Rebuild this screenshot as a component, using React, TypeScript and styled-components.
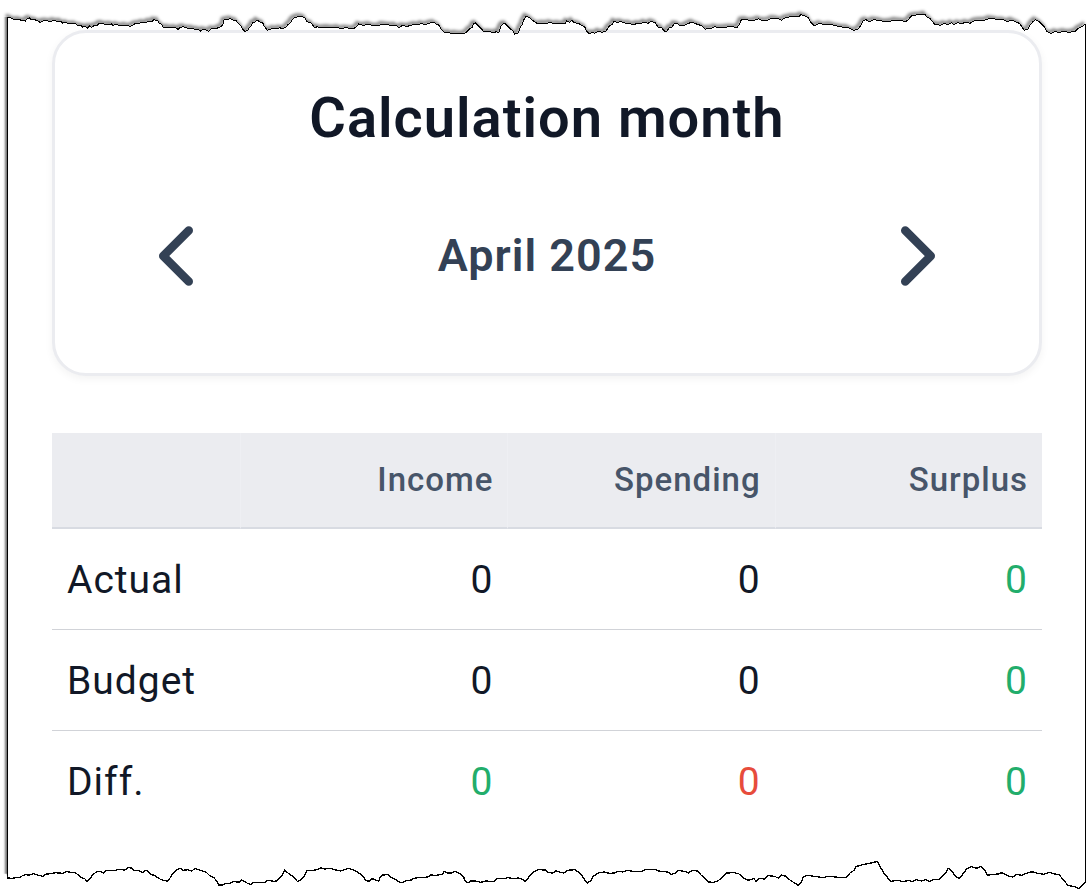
import React from 'react';
import styled, { createGlobalStyle } from 'styled-components';
import { ChevronLeft, ChevronRight } from 'lucide-react';

const GlobalStyle = createGlobalStyle`
  * { box-sizing: border-box; }
  body {
    margin: 0;
    background: #ffffff;
    color: #111827;
    font-family: Roboto, "Liberation Sans", sans-serif;
  }
`;

const Page = styled.div`
  position: relative;
  padding: 0 1px 0 7px;
`;

const Paper = styled.main`
  padding: 30px 43px 63px 44px;
  border: solid #000000;
  border-width: 0 1px;
  box-shadow: -2px 0 2px rgba(0, 0, 0, 0.55);
`;

const TornEdge = styled.svg<{ $side: 'top' | 'bottom' }>`
  position: absolute;
  left: 0;
  ${({ $side }) => $side}: 0;
  display: block;
  width: 100%;
  height: ${({ $side }) => ($side === 'top' ? 40 : 50)}px;
  pointer-events: none;
`;

const Card = styled.section`
  display: flex;
  flex-direction: column;
  gap: 53px;
  padding: 51px 70px 66px;
  background: #ffffff;
  border: 3px solid #ebecf0;
  border-radius: 34px;
  box-shadow: 0 3px 8px rgba(0, 0, 0, 0.05);
`;

const Title = styled.h1`
  margin: 0;
  font-size: 56px;
  line-height: 68px;
  font-weight: 600;
  letter-spacing: 1px;
  text-align: center;
`;

const MonthPicker = styled.div`
  display: flex;
  align-items: center;
  justify-content: space-between;
`;

const Month = styled.span`
  color: #334155;
  font-size: 45px;
  line-height: 68px;
  font-weight: 600;
  letter-spacing: 1px;
`;

const ArrowButton = styled.button`
  display: flex;
  padding: 0;
  border: 0;
  background: none;
  color: #334155;
  cursor: pointer;
`;

const Table = styled.table`
  width: 100%;
  margin-top: 57px;
  border-spacing: 0;
  table-layout: fixed;
  letter-spacing: 1px;
`;

const HeadCell = styled.th<{ $width: number }>`
  width: ${({ $width }) => $width}%;
  height: 96px;
  padding: 0 14px;
  background: #ebecf0;
  border-bottom: 2px solid #d8dbe2;
  color: #475569;
  font-size: 33px;
  line-height: 40px;
  font-weight: 500;
  text-align: right;

  & + & {
    border-left: 1px solid #eeeff3;
  }
`;

const Row = styled.tr`
  & > * {
    height: 101px;
    padding: 2px 14px 0 15px;
    border-bottom: 1px solid #d1d3d8;
    font-size: 39px;
    line-height: 48px;
  }

  &:last-child > * {
    border-bottom-color: transparent;
  }
`;

const RowLabel = styled.th`
  font-weight: 400;
  text-align: left;
`;

const tones = { plain: '#111827', good: '#22ad6b', bad: '#e74c3c' };
type Tone = keyof typeof tones;

const Amount = styled.td<{ $tone: Tone }>`
  color: ${({ $tone }) => tones[$tone]};
  text-align: right;
`;

/* Tear outlines, in thirds of a pixel across a 1087px wide sheet. */
const topTear =
  '22,51 30,52 36,56 45,59 58,58 63,61 76,63 82,56 88,54 94,59 104,59 113,63 120,67 128,63 140,62 150,65 160,61 172,64 182,63 188,69 200,68 206,72 226,71 232,76 244,77 248,81 256,79 262,84 268,78 274,82 282,77 292,76 297,70 306,69 314,73 334,72 338,76 350,73 362,78 376,75 390,79 398,75 405,71 420,69 426,66 436,69 446,63 456,64 462,59 468,62 473,60 478,70 484,73 490,82 504,81 512,84 526,82 534,88 540,82 550,80 560,84 578,84 584,88 594,87 602,93 608,88 618,90 625,94 634,86 648,87 656,82 664,80 670,71 672,60 682,58 690,56 700,60 708,61 714,70 722,76 728,88 735,94 744,91 748,82 754,78 758,68 766,66 771,60 780,66 788,68 792,78 802,91 812,88 820,84 832,87 838,83 ' +
  '848,86 856,83 864,74 872,67 876,59 884,53 896,49 908,50 914,53 920,65 934,69 944,83 952,80 960,84 982,82 1000,84 1014,82 1022,86 1036,83 1060,86 1070,80 1076,72 1088,76 1108,73 1118,77 1136,78 1146,72 1172,76 1186,75 1198,83 1206,77 1222,79 1244,73 1256,75 1264,70 1276,74 1290,69 1302,67 1308,72 1316,75 1324,89 1332,96 1338,99 1348,97 1354,102 1364,99 1386,102 1398,98 1408,87 1416,83 1420,72 1426,69 1436,78 1442,84 1452,96 1470,95 1480,98 1490,95 1496,99 1502,80 1508,72 1516,71 1530,86 1538,92 1544,102 1554,100 1560,84 1566,74 1570,62 1578,48 1590,54 1598,61 1606,67 1614,72 1626,69 ' +
  '1640,70 1650,67 1662,71 1676,69 1682,72 1696,70 1700,63 1708,67 1716,61 1722,68 1736,70 1746,77 1754,80 1760,94 1768,102 1776,97 1784,100 1796,93 1806,97 1818,94 1824,83 1830,77 1836,74 1842,63 1850,67 1862,65 1874,69 1890,69 1898,75 1912,70 1922,72 1932,66 1944,70 1954,64 1966,68 1974,81 1984,81 1990,90 1998,96 2004,89 2008,82 2016,82 2022,71 2034,72 2040,78 2052,77 2066,70 2076,66 2086,71 2096,74 2108,79 2116,89 2122,84 2136,84 2144,80 2156,83 2174,82 2190,80 2212,82 2218,73 2224,59 2238,58 2248,62 2266,60 2276,56 2286,61 2304,60 2318,54 2334,56 2344,61 2354,54 2376,49 2398,49 2402,44 2414,48 2424,52 2432,67 ' +
  '2442,77 2452,73 2460,70 2472,75 2490,73 2506,77 2520,80 2530,82 2542,82 2552,87 2562,91 2574,87 2584,74 2590,62 2598,59 2608,65 2620,59 2638,61 2654,65 2670,64 2684,60 2702,62 2718,64 2726,58 2734,48 2748,45 2762,44 2774,42 2780,50 2790,56 2804,73 2812,72 2820,76 2832,70 2844,74 2854,68 2862,74 2874,68 2886,71 2898,66 2910,70 2924,62 2940,60 2956,60 2968,55 2984,57 2996,60 3010,59 3022,65 3034,60 3046,65 3058,70 3066,80 3072,91 3084,88 3090,76 3098,66 3106,59 3120,67 3134,82 3140,95 3154,100 3166,94 3174,98 3190,94 3206,97 3226,94 3236,84 3246,80 3257,72';

/* The bottom strip starts 845px down the sheet. */
const bottomTear =
  '22,99 36,100 50,98 58,98 66,93 78,88 84,91 102,86 112,90 128,94 140,87 152,86 166,83 190,85 198,79 212,82 224,83 238,91 244,98 254,101 262,110 272,98 278,90 290,80 304,80 310,84 318,77 344,77 354,73 374,75 384,68 396,69 402,76 416,77 428,83 436,76 444,78 452,87 466,93 476,100 486,105 502,108 512,97 518,86 528,76 540,70 550,76 564,74 574,78 586,71 598,75 618,81 628,91 642,98 652,111 656,120 668,120 676,115 688,116 698,110 718,111 724,105 734,109 744,116 752,118 760,112 796,112 802,106 822,109 832,107 840,97 ' +
  '848,89 854,76 864,84 878,94 892,109 904,104 912,95 920,77 938,76 952,74 962,68 974,72 990,70 1004,74 1022,78 1032,74 1046,70 1062,75 1078,85 1090,96 1098,107 1108,109 1116,101 1128,105 1136,109 1140,97 1146,90 1164,89 1172,96 1188,104 1198,111 1208,113 1216,108 1234,105 1242,100 1256,98 1272,97 1284,96 1292,90 1308,91 1328,88 1332,79 1344,84 1356,84 1366,79 1378,85 1390,94 1396,109 1404,114 1412,108 1426,108 1442,112 1458,108 1482,110 1490,100 1510,101 1524,98 1540,101 1556,99 1568,103 1576,109 1586,97 1594,88 1604,79 1614,74 1636,75 ' +
  '1646,83 1658,84 1668,77 1678,81 1692,84 1702,76 1726,74 1738,84 1746,91 1754,105 1762,114 1772,107 1780,94 1794,84 1814,81 1828,85 1844,84 1854,79 1868,81 1882,76 1902,80 1924,79 1936,74 1966,74 1980,79 2004,81 2014,88 2026,84 2036,76 2056,80 2066,84 2076,76 2092,78 2104,91 2116,101 2126,111 2142,112 2156,106 2168,96 2180,84 2202,83 2216,86 2228,97 2244,106 2262,101 2268,109 2276,100 2294,102 2304,92 2324,94 2336,100 2344,90 2358,94 2372,107 2386,115 2394,121 2402,115 2410,96 2420,91 2444,94 ' +
  '2468,98 2484,94 2508,96 2524,98 2540,97 2550,84 2562,76 2568,65 2584,60 2602,56 2622,52 2632,49 2640,64 2650,82 2662,97 2672,109 2694,106 2710,110 2728,106 2736,110 2748,104 2764,108 2778,104 2788,109 2802,103 2816,104 2828,93 2838,84 2844,70 2854,76 2866,94 2878,100 2888,88 2900,72 2914,65 2932,70 2944,64 2954,75 2962,90 2976,89 2994,87 3006,83 3022,92 3038,96 3050,88 3064,91 3080,85 3096,80 3112,85 3132,88 3148,82 3160,86 3178,90 3188,102 3204,121 3224,125 3236,130 3246,122 3257,111';

const TopEdge = () => (
  <TornEdge $side="top" viewBox="0 0 3261 120" preserveAspectRatio="none" aria-hidden="true">
    <defs>
      <clipPath id="above-tear">
        <polygon points={`0,0 0,51 ${topTear} 3261,72 3261,0`} />
      </clipPath>
      <filter id="tear-shadow" x="-1%" y="-50%" width="102%" height="200%">
        <feGaussianBlur stdDeviation="4" />
      </filter>
    </defs>
    <polygon points={`0,0 0,51 ${topTear} 3261,72 3261,0`} fill="#ffffff" />
    <g clipPath="url(#above-tear)">
      <polyline
        points={topTear}
        transform="translate(-5 -4)"
        fill="none"
        stroke="#000000"
        strokeOpacity="0.5"
        strokeWidth="10"
        filter="url(#tear-shadow)"
      />
    </g>
    <polyline points={topTear} fill="none" stroke="#000000" strokeWidth="3" shapeRendering="crispEdges" />
  </TornEdge>
);

const BottomEdge = () => (
  <TornEdge $side="bottom" viewBox="0 0 3261 150" preserveAspectRatio="none" aria-hidden="true">
    <polygon points={`0,150 0,86 20,86 ${bottomTear} 3261,111 3261,150`} fill="#ffffff" />
    <polyline points={bottomTear} fill="none" stroke="#000000" strokeWidth="4" shapeRendering="crispEdges" />
  </TornEdge>
);

const rows: { label: string; tones: [Tone, Tone, Tone] }[] = [
  { label: 'Actual', tones: ['plain', 'plain', 'good'] },
  { label: 'Budget', tones: ['plain', 'plain', 'good'] },
  { label: 'Diff.', tones: ['good', 'bad', 'good'] },
];

export default function App() {
  return (
    <Page>
      <GlobalStyle />
      <Paper>
        <Card>
          <Title>Calculation month</Title>
          <MonthPicker>
            <ArrowButton type="button" aria-label="Previous month">
              <ChevronLeft size={102} />
            </ArrowButton>
            <Month>April 2025</Month>
            <ArrowButton type="button" aria-label="Next month">
              <ChevronRight size={102} />
            </ArrowButton>
          </MonthPicker>
        </Card>
        <Table>
          <thead>
            <tr>
              <HeadCell $width={19} aria-label="Type" />
              <HeadCell $width={27} scope="col">Income</HeadCell>
              <HeadCell $width={27} scope="col">Spending</HeadCell>
              <HeadCell $width={27} scope="col">Surplus</HeadCell>
            </tr>
          </thead>
          <tbody>
            {rows.map((row) => (
              <Row key={row.label}>
                <RowLabel scope="row">{row.label}</RowLabel>
                {row.tones.map((tone, i) => (
                  <Amount key={i} $tone={tone}>0</Amount>
                ))}
              </Row>
            ))}
          </tbody>
        </Table>
      </Paper>
      <TopEdge />
      <BottomEdge />
    </Page>
  );
}
